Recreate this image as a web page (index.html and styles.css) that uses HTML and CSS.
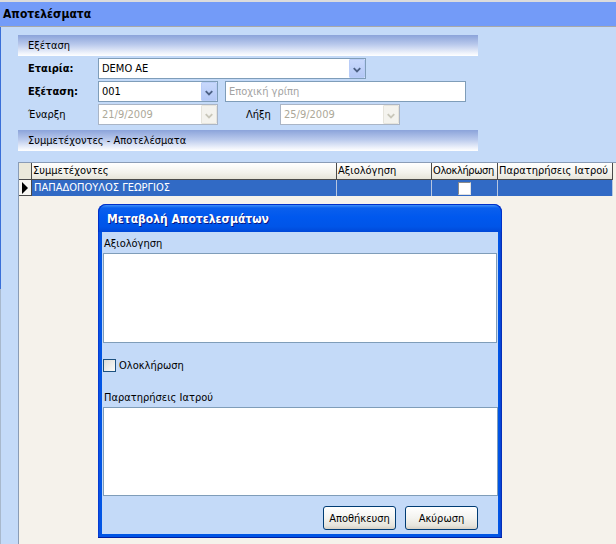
FILE: index.html
```html
<!DOCTYPE html>
<html>
<head>
<meta charset="utf-8">
<link rel="stylesheet" href="styles.css">
</head>
<body>
<div class="window">
  <div class="topline"></div>
  <div class="titlebar">Αποτελέσματα</div>
  <div class="client">
    <div class="section">Εξέταση</div>
    <div class="form">
      <div class="row">
        <span class="lbl bold">Εταιρία:</span>
        <div class="combo w-company"><span class="val">DEMO AE</span><span class="dd"><svg width="15" height="19" viewBox="0 0 15 19"><path d="M4 8 L7.5 11.5 L11 8" fill="none" stroke="#4d6185" stroke-width="2"/></svg></span></div>
      </div>
      <div class="row">
        <span class="lbl bold">Εξέταση:</span>
        <div class="combo w-small"><span class="val">001</span><span class="dd"><svg width="15" height="19" viewBox="0 0 15 19"><path d="M4 8 L7.5 11.5 L11 8" fill="none" stroke="#4d6185" stroke-width="2"/></svg></span></div>
        <div class="text w-desc">Εποχική γρίπη</div>
      </div>
      <div class="row">
        <span class="lbl">Έναρξη</span>
        <div class="combo w-small disabled"><span class="val">21/9/2009</span><span class="dd"><svg width="15" height="19" viewBox="0 0 15 19"><path d="M4 8 L7.5 11.5 L11 8" fill="none" stroke="#c9c7ba" stroke-width="2"/></svg></span></div>
        <span class="lbl lbl-end">Λήξη</span>
        <div class="combo w-small disabled"><span class="val">25/9/2009</span><span class="dd"><svg width="15" height="19" viewBox="0 0 15 19"><path d="M4 8 L7.5 11.5 L11 8" fill="none" stroke="#c9c7ba" stroke-width="2"/></svg></span></div>
      </div>
    </div>
    <div class="section s2">Συμμετέχοντες - Αποτελέσματα</div>
    <div class="grid">
      <div class="grow ghead">
        <div class="cell rh"></div>
        <div class="cell">Συμμετέχοντες</div>
        <div class="cell">Αξιολόγηση</div>
        <div class="cell tight">Ολοκλήρωση</div>
        <div class="cell">Παρατηρήσεις Ιατρού</div>
      </div>
      <div class="grow sel">
        <div class="cell rh"><svg width="8" height="12" viewBox="0 0 8 12"><path d="M1 0 L7 6 L1 12 Z" fill="#000"/></svg></div>
        <div class="cell">ΠΑΠΑΔΟΠΟΥΛΟΣ ΓΕΩΡΓΙΟΣ</div>
        <div class="cell"></div>
        <div class="cell center"><span class="gcheck"></span></div>
        <div class="cell"></div>
      </div>
    </div>
  </div>
  <div class="edge"></div>
  <div class="dialog">
    <div class="dtitle">Μεταβολή Αποτελεσμάτων</div>
    <div class="dbody">
      <div class="dlabel">Αξιολόγηση</div>
      <div class="area a1"></div>
      <div class="checkrow"><span class="check"></span><span>Ολοκλήρωση</span></div>
      <div class="dlabel l2">Παρατηρήσεις Ιατρού</div>
      <div class="area a2"></div>
      <div class="buttons">
        <span class="button">Αποθήκευση</span>
        <span class="button">Ακύρωση</span>
      </div>
    </div>
  </div>
</div>
</body>
</html>
```
FILE: styles.css
```css
* { box-sizing: border-box; }
html, body { margin: 0; padding: 0; }
body {
  font-family: "DejaVu Sans Condensed", "DejaVu Sans", sans-serif;
  font-stretch: condensed;
  font-size: 11px;
  color: #000;
  background: #c4daf8;
}
.window {
  position: relative;
  width: 616px;
  height: 544px;
  overflow: hidden;
  background: #c4daf8;
  display: flex;
  flex-direction: column;
}
.topline {
  height: 2px;
  background: #dcdcdc;
}
.titlebar {
  height: 25px;
  background: #739bf8;
  border-bottom: 1px solid #a8a8a8;
  font-weight: bold;
  font-size: 12px;
  line-height: 24px;
  padding-left: 3px;
}
.client {
  flex: 1;
  display: flex;
  flex-direction: column;
  padding-left: 18px;
  border-left: 1px solid #a8b8cc;
}
.edge {
  position: absolute;
  left: 0;
  top: 27px;
  width: 1px;
  height: 262px;
  background: #3a6fd8;
}
.section {
  width: 460px;
  height: 21px;
  margin-top: 8px;
  margin-left: -1px;
  padding-left: 10px;
  line-height: 21px;
  background: linear-gradient(#8ba3da, #b9c9ec 45%, #eef2fb 85%, #ffffff);
}
.section.s2 { margin-top: 5px; }
.form {
  padding-left: 9px;
  margin-top: 2px;
  display: flex;
  flex-direction: column;
  gap: 2px;
}
.row {
  display: flex;
  align-items: center;
  height: 21px;
}
.lbl {
  width: 70px;
  flex: none;
}
.lbl.bold { font-weight: bold; font-size: 11px; }
.lbl.lbl-end { width: 62px; padding-left: 28px; }
.combo, .text {
  height: 21px;
  border: 1px solid #7f9db9;
  background: #fff;
  display: flex;
  align-items: center;
  flex: none;
}
.combo .val, .text { padding-left: 3px; }
.combo .val { flex: 1; }
.dd {
  width: 16px;
  height: 19px;
  background: linear-gradient(#c8d8fc, #b4c8f6);
  border: 1px solid #b9cdf8;
  border-radius: 1px;
  display: flex;
}
.combo.disabled { border-color: #aab5c6; color: #aca899; }
.combo.disabled .dd {
  background: #f4f3ee;
  border-color: #e6e4dc;
}
.w-company { width: 268px; }
.w-small { width: 120px; }
.w-desc { width: 241px; margin-left: 7px; color: #a3a3a3; }
.grid {
  flex: 1;
  margin-top: 11px;
  margin-left: -1px;
  border-top: 1px solid #8a9cb6;
  border-left: 1px solid #8a9cb6;
  background: #f5f2eb;
}
.grow {
  display: grid;
  grid-template-columns: 13px 305px 95px 66px 115px;
}
.ghead { height: 17px; }
.ghead .cell {
  background: linear-gradient(#ffffff, #f3f2ec 60%, #e6e4d9);
  border-right: 1px solid #4a4a4a;
  border-bottom: 1px solid #4a4a4a;
  line-height: 16px;
  padding-left: 1px;
  white-space: nowrap;
  overflow: hidden;
}
.ghead .cell.tight { letter-spacing: -0.4px; padding-left: 1px; }
.ghead .cell.rh { background: #ebe9db; }
.sel { height: 16px; }
.sel .cell {
  background: #316ac5;
  color: #fff;
  border-right: 1px solid #b7c6e0;
  line-height: 16px;
  padding-left: 2px;
  white-space: nowrap;
  overflow: hidden;
}
.sel .cell.rh {
  background: #f7f6f2;
  border-right: 1px solid #4a4a4a;
  border-bottom: 1px solid #4a4a4a;
  padding-left: 2px;
  display: flex;
  align-items: center;
}
.cell.center {
  display: flex;
  justify-content: center;
  align-items: center;
  padding-left: 0;
}
.gcheck {
  width: 13px;
  height: 13px;
  background: #fff;
  border-top: 1px solid #8a8a8a;
  border-left: 1px solid #8a8a8a;
  border-right: 1px solid #e0e0e0;
  border-bottom: 1px solid #e0e0e0;
}
.dialog {
  position: absolute;
  left: 98px;
  top: 204px;
  width: 404px;
  height: 334px;
  background: linear-gradient(90deg, #0027c4 0, #0a4fe0 1px, #0055e5 3px, #0055e5 calc(100% - 3px), #0a3fd0 calc(100% - 1px), #001ea0 100%);
  border-radius: 8px 8px 0 0;
  border-bottom: 1px solid #001ea0;
  display: flex;
  flex-direction: column;
}
.dtitle {
  height: 28px;
  border-radius: 8px 8px 0 0;
  background: linear-gradient(#3d8ff8 0, #0a5fed 3px, #0058ee 45%, #0055e8 80%, #0048d8 100%);
  color: #fff;
  font-weight: bold;
  font-size: 12px;
  line-height: 29px;
  padding-left: 8px;
  text-shadow: 1px 1px 0 #0a1883;
  border: 1px solid #0030c8;
  border-bottom: none;
}
.dbody {
  margin: 0 4px;
  height: 302px;
  background: #c4daf8;
  padding-left: 1px;
  display: flex;
  flex-direction: column;
}
.dlabel {
  height: 13px;
  line-height: 13px;
  margin-top: 5px;
  padding-left: 1px;
}
.dlabel.l2 { margin-top: 19px; }
.area {
  background: #fff;
  border: 1px solid #7f9db9;
  margin-top: 3px;
}
.area.a1 { width: 394px; height: 90px; }
.area.a2 { width: 395px; height: 89px; }
.checkrow {
  display: flex;
  align-items: center;
  gap: 3px;
  margin-top: 16px;
  height: 13px;
}
.check {
  width: 13px;
  height: 13px;
  border: 1px solid #1c5180;
  background: linear-gradient(135deg, #dcdcd7, #fbfbf9);
}
.buttons {
  display: flex;
  justify-content: flex-end;
  gap: 9px;
  margin-top: 10px;
  padding-right: 20px;
}
.button {
  width: 73px;
  height: 24px;
  border: 1px solid #003c74;
  border-radius: 3px;
  background: linear-gradient(#ffffff, #f3f3ef 50%, #e6e4dc 85%, #d6d0c5);
  display: flex;
  align-items: center;
  justify-content: center;
}
```
